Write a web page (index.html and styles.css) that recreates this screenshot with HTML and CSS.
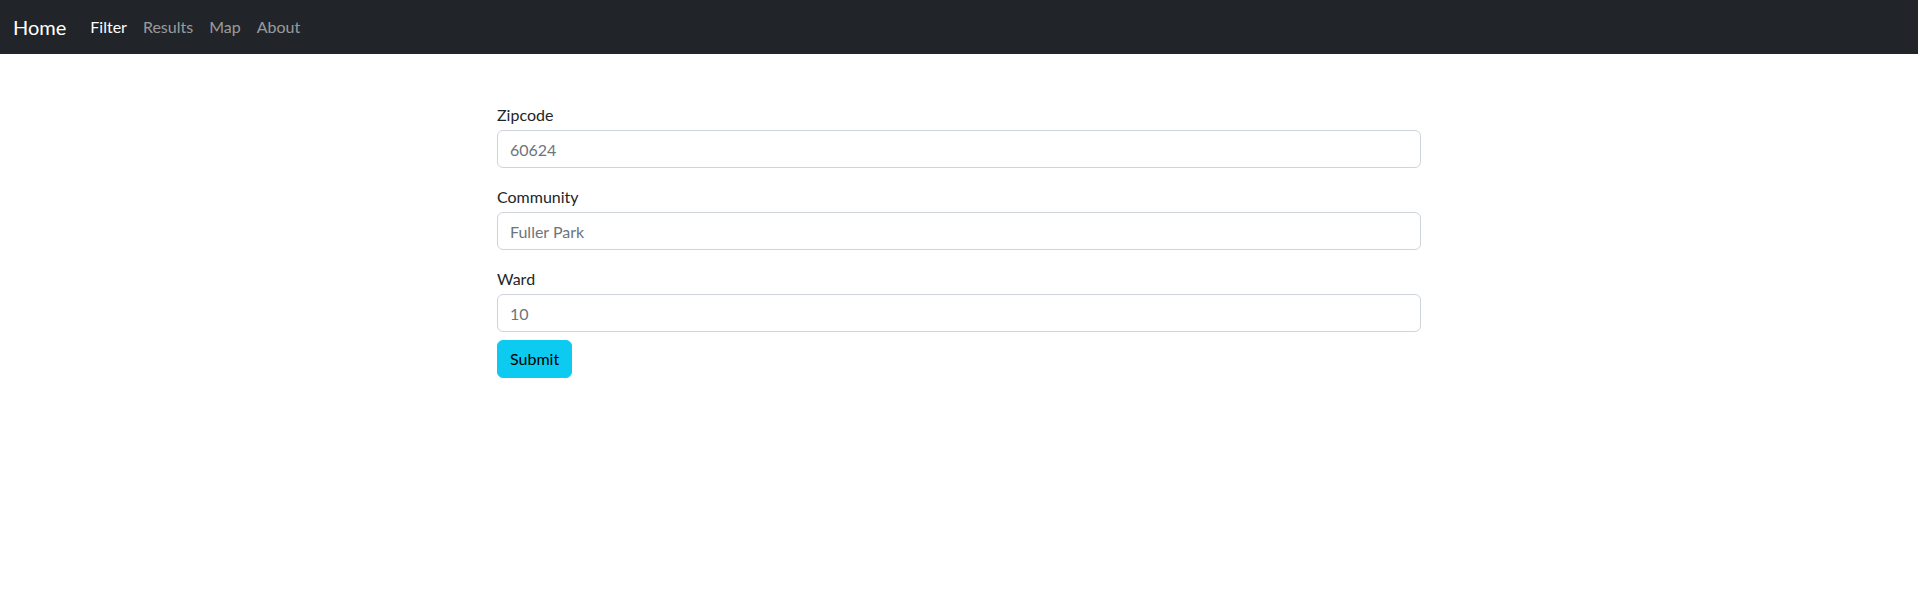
FILE: index.html
```html
<!DOCTYPE html>
<html lang="en">
<head>
<meta charset="utf-8">
<title>Filter</title>
<link rel="stylesheet" href="styles.css">
</head>
<body>
<nav class="navbar">
  <a class="brand" href="#">Home</a>
  <ul class="nav">
    <li><a class="nav-link active" href="#">Filter</a></li>
    <li><a class="nav-link" href="#">Results</a></li>
    <li><a class="nav-link" href="#">Map</a></li>
    <li><a class="nav-link" href="#">About</a></li>
  </ul>
</nav>
<main class="main">
  <form class="form">
    <div class="field">
      <label class="label" for="zip">Zipcode</label>
      <input class="input" id="zip" type="text" placeholder="60624">
    </div>
    <div class="field">
      <label class="label" for="community">Community</label>
      <input class="input" id="community" type="text" placeholder="Fuller Park">
    </div>
    <div class="field last">
      <label class="label" for="ward">Ward</label>
      <input class="input" id="ward" type="text" placeholder="10">
    </div>
    <div><button class="btn" type="button">Submit</button></div>
  </form>
</main>
</body>
</html>
```
FILE: styles.css
```css
* { box-sizing: border-box; }
html, body { margin: 0; padding: 0; }
body {
  font-family: Lato, "Noto Sans", sans-serif;
  font-size: 16px;
  line-height: 24px;
  color: #212529;
  background: #fff;
}
.navbar {
  height: 54px;
  background: #212529;
  display: flex;
  align-items: center;
  padding: 0 12px 0 13px;
}
.brand {
  font-size: 20px;
  line-height: 30px;
  color: #fff;
  text-decoration: none;
  margin-right: 16px;
}
.nav {
  display: flex;
  list-style: none;
  margin: 0;
  padding: 0;
}
.nav-link {
  display: block;
  padding: 8px 8px;
  color: rgba(255,255,255,0.55);
  text-decoration: none;
}
.nav-link.active { color: #fff; }
.main {
  display: flex;
  justify-content: center;
  padding-top: 49px;
}
.form {
  width: 924px;
  display: flex;
  flex-direction: column;
}
.field {
  display: flex;
  flex-direction: column;
  margin-bottom: 17px;
}
.field.last { margin-bottom: 8px; }
.label {
  line-height: 24px;
  margin-bottom: 3px;
}
.input {
  height: 38px;
  border: 1px solid #ced4da;
  border-radius: 6px;
  padding: 6px 12px;
  font: inherit;
  color: #212529;
  background: #fff;
}
.input::placeholder { color: #6c757d; opacity: 1; }
.btn {
  height: 38px;
  padding: 6px 12px;
  font: inherit;
  color: #000;
  background: #0dcaf0;
  border: 1px solid #0dcaf0;
  border-radius: 6px;
}
```
